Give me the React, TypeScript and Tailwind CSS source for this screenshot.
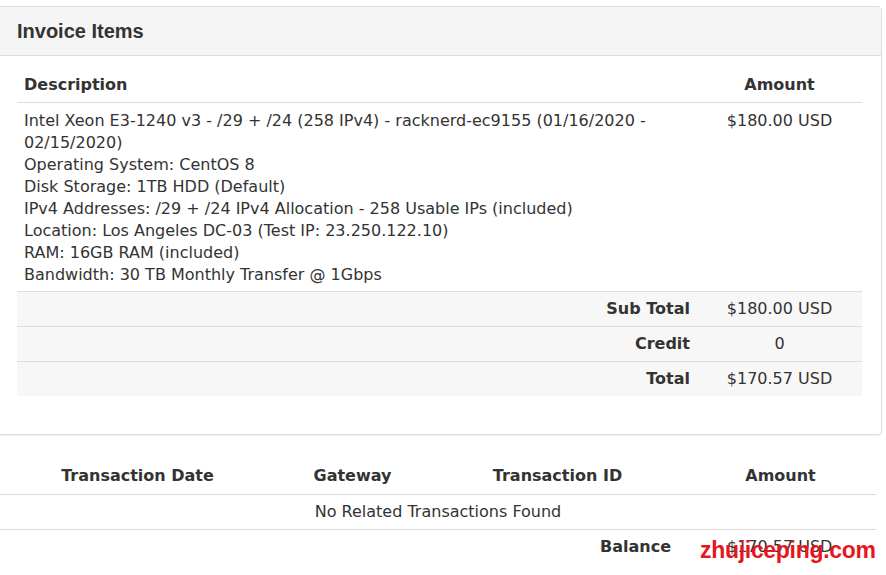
import React from "react";

const lines = [
  "Intel Xeon E3-1240 v3 - /29 + /24 (258 IPv4) - racknerd-ec9155 (01/16/2020 - 02/15/2020)",
  "Operating System: CentOS 8",
  "Disk Storage: 1TB HDD (Default)",
  "IPv4 Addresses: /29 + /24 IPv4 Allocation - 258 Usable IPs (included)",
  "Location: Los Angeles DC-03 (Test IP: 23.250.122.10)",
  "RAM: 16GB RAM (included)",
  "Bandwidth: 30 TB Monthly Transfer @ 1Gbps",
];

const totals = [
  { label: "Sub Total", value: "$180.00 USD" },
  { label: "Credit", value: "0" },
  { label: "Total", value: "$170.57 USD" },
];

export default function App() {
  return (
    <div className="relative w-[886px] h-[575px] overflow-hidden bg-white text-[#333] font-['DejaVu_Sans',sans-serif] text-[16px]">
      {/* Invoice items panel */}
      <div className="mt-[6px] -ml-px w-[883px] border border-[#ddd] rounded-r-[4px] shadow-[0_1px_1px_rgba(0,0,0,0.05)]">
        <div className="h-[49px] bg-[#f5f5f5] border-b border-[#ddd] px-[17px] flex items-center">
          <h3 className="font-['Liberation_Sans',Arial,sans-serif] font-bold text-[20px]">Invoice Items</h3>
        </div>
        <div className="px-[17px] pt-[12px] pb-[38px]">
          <table className="w-[845px] border-collapse">
            <thead>
              <tr className="h-[34px] border-b border-[#ddd]">
                <th className="text-left font-bold px-[7px]">Description</th>
                <th className="w-[165px] text-center font-bold">Amount</th>
              </tr>
            </thead>
            <tbody>
              <tr className="border-b border-[#ddd] align-top">
                <td className="px-[7px] pt-[7px] pb-[5px] leading-[22px]">
                  {lines.map((l) => (
                    <div key={l}>{l}</div>
                  ))}
                </td>
                <td className="text-center pt-[7px] leading-[22px]">$180.00 USD</td>
              </tr>
              {totals.map((t, i) => (
                <tr key={t.label} className={`h-[35px] bg-[#f7f7f7] ${i < 2 ? "border-b border-[#ddd]" : ""}`}>
                  <td className="text-right font-bold px-[7px]">{t.label}</td>
                  <td className="text-center">{t.value}</td>
                </tr>
              ))}
            </tbody>
          </table>
        </div>
      </div>

      {/* Transactions */}
      <table className="mt-[24px] w-[876px] border-collapse">
        <thead>
          <tr className="h-[35px] border-b border-[#ddd] font-bold">
            <th className="w-[275px] text-center">Transaction Date</th>
            <th className="w-[155px] text-center">Gateway</th>
            <th className="w-[255px] text-center">Transaction ID</th>
            <th className="text-center">Amount</th>
          </tr>
        </thead>
        <tbody>
          <tr className="h-[35px] border-b border-[#ddd]">
            <td colSpan={4} className="text-center">No Related Transactions Found</td>
          </tr>
          <tr className="h-[35px]">
            <td colSpan={3} className="text-right font-bold pr-[14px]">Balance</td>
            <td className="text-left pl-[42px]">$170.57 USD</td>
          </tr>
        </tbody>
      </table>

      <div className="absolute left-[700px] top-[536px] font-['Liberation_Sans',Arial,sans-serif] font-bold text-[23px] leading-[28px] tracking-[-0.3px] text-[#e5161d]">
        zhujiceping.com
      </div>
    </div>
  );
}
